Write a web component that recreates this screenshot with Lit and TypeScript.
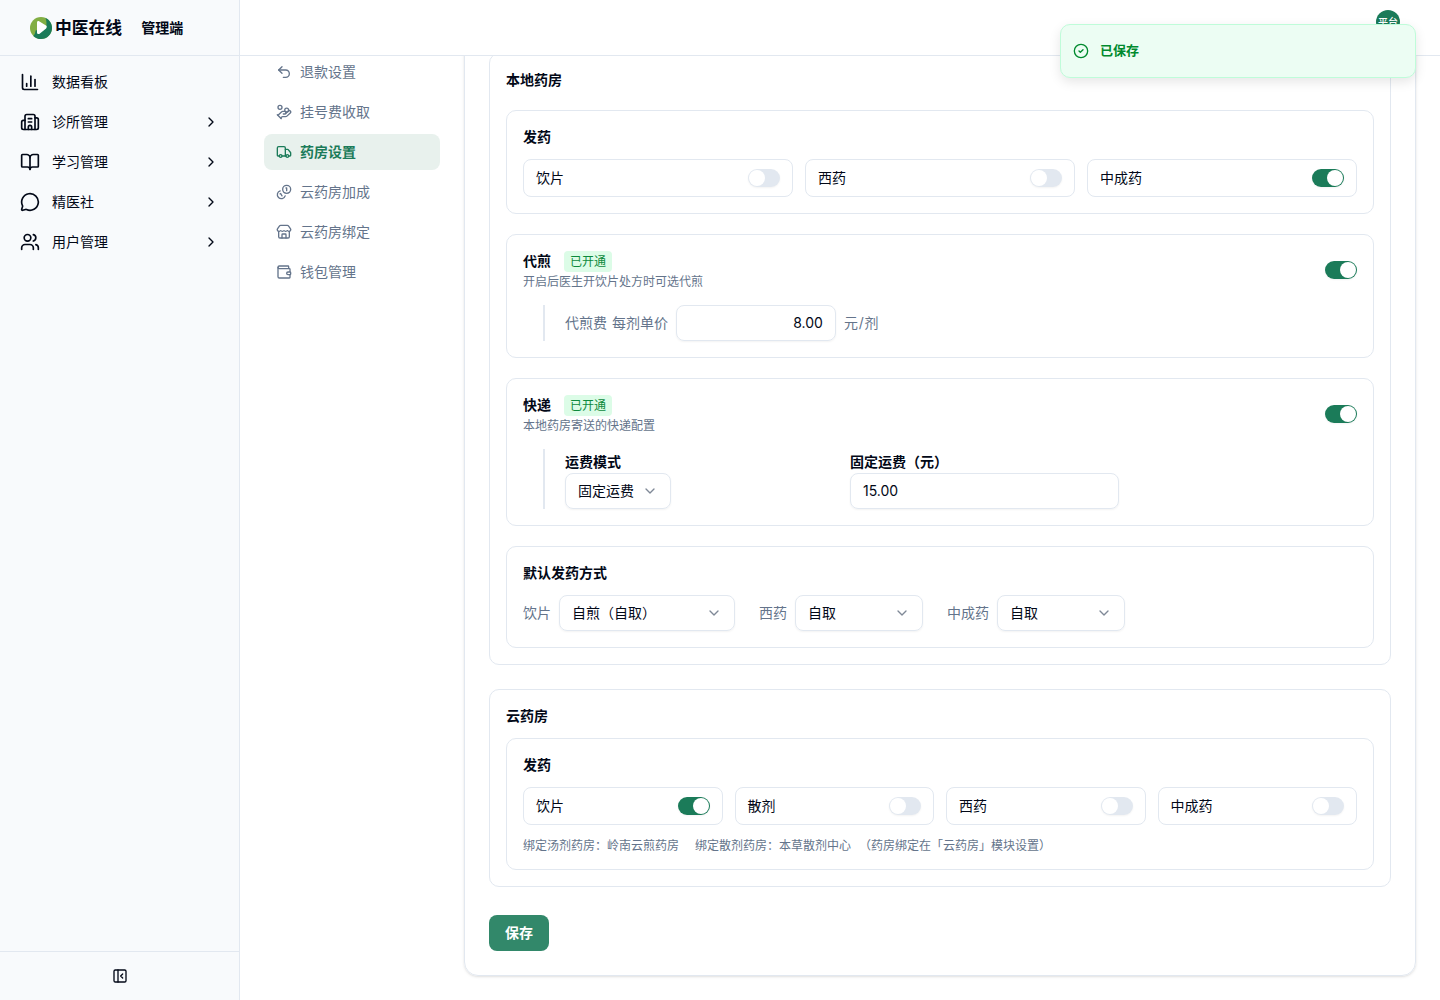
import { LitElement, html, css, svg, type SVGTemplateResult } from "lit";
import { customElement, property } from "lit/decorators.js";
import { classMap } from "lit/directives/class-map.js";

const icons: Record<string, SVGTemplateResult> = {
  chart: svg`<path d="M3 3v16a2 2 0 0 0 2 2h16"/><path d="M18 17V9"/><path d="M13 17V5"/><path d="M8 17v-3"/>`,
  building: svg`<path d="M10 12h4"/><path d="M10 8h4"/><path d="M14 21v-3a2 2 0 0 0-4 0v3"/><path d="M6 10H4a2 2 0 0 0-2 2v7a2 2 0 0 0 2 2h16a2 2 0 0 0 2-2V9a2 2 0 0 0-2-2h-2"/><path d="M6 21V5a2 2 0 0 1 2-2h8a2 2 0 0 1 2 2v16"/>`,
  book: svg`<path d="M12 7v14"/><path d="M3 18a1 1 0 0 1-1-1V4a1 1 0 0 1 1-1h5a4 4 0 0 1 4 4 4 4 0 0 1 4-4h5a1 1 0 0 1 1 1v13a1 1 0 0 1-1 1h-6a3 3 0 0 0-3 3 3 3 0 0 0-3-3z"/>`,
  message: svg`<path d="M2.992 16.342a2 2 0 0 1 .094 1.167l-1.065 3.29a1 1 0 0 0 1.236 1.168l3.413-.998a2 2 0 0 1 1.099.092 10 10 0 1 0-4.777-4.719"/>`,
  users: svg`<path d="M16 21v-2a4 4 0 0 0-4-4H6a4 4 0 0 0-4 4v2"/><path d="M16 3.128a4 4 0 0 1 0 7.744"/><path d="M22 21v-2a4 4 0 0 0-3-3.87"/><circle cx="9" cy="7" r="4"/>`,
  right: svg`<path d="m9 18 6-6-6-6"/>`,
  down: svg`<path d="m6 9 6 6 6-6"/>`,
  undo: svg`<path d="M9 14 4 9l5-5"/><path d="M4 9h10.5a5.5 5.5 0 0 1 5.5 5.5a5.5 5.5 0 0 1-5.5 5.5H11"/>`,
  hand: svg`<path d="M11 15h2a2 2 0 1 0 0-4h-3c-.6 0-1.1.2-1.4.6L3 17"/><path d="m7 21 1.6-1.4c.3-.4.8-.6 1.4-.6h4c1.1 0 2.1-.4 2.8-1.2l4.6-4.4a2 2 0 0 0-2.75-2.91l-4.2 3.9"/><path d="m2 16 6 6"/><circle cx="16" cy="9" r="2.9"/><circle cx="6" cy="5" r="3"/>`,
  truck: svg`<path d="M14 18V6a2 2 0 0 0-2-2H4a2 2 0 0 0-2 2v11a1 1 0 0 0 1 1h2"/><path d="M15 18H9"/><path d="M19 18h2a1 1 0 0 0 1-1v-3.65a1 1 0 0 0-.22-.624l-3.48-4.35A1 1 0 0 0 17.52 8H14"/><circle cx="17" cy="18" r="2"/><circle cx="7" cy="18" r="2"/>`,
  coins: svg`<path d="M13.744 17.736a6 6 0 1 1-7.48-7.48"/><path d="M15 6h1v4"/><path d="m6.134 14.768.866-.5 2 3.464"/><circle cx="16" cy="8" r="6"/>`,
  store: svg`<path d="M15 21v-5a1 1 0 0 0-1-1h-4a1 1 0 0 0-1 1v5"/><path d="M17.774 10.31a1.12 1.12 0 0 0-1.549 0 2.5 2.5 0 0 1-3.451 0 1.12 1.12 0 0 0-1.548 0 2.5 2.5 0 0 1-3.452 0 1.12 1.12 0 0 0-1.549 0 2.5 2.5 0 0 1-3.77-3.248l2.889-4.184A2 2 0 0 1 7 2h10a2 2 0 0 1 1.653.873l2.895 4.192a2.5 2.5 0 0 1-3.774 3.244"/><path d="M4 10.95V19a2 2 0 0 0 2 2h12a2 2 0 0 0 2-2v-8.05"/>`,
  wallet: svg`<path d="M19 7V4a1 1 0 0 0-1-1H5a2 2 0 0 0 0 4h15a1 1 0 0 1 1 1v4h-3a2 2 0 0 0 0 4h3a1 1 0 0 0 1-1v-2a1 1 0 0 0-1-1"/><path d="M3 5v14a2 2 0 0 0 2 2h15a1 1 0 0 0 1-1v-4"/>`,
  panel: svg`<rect x="3" y="3" width="18" height="18" rx="2"/><path d="M9 3v18"/><path d="m16 15-3-3 3-3"/>`,
  check: svg`<circle cx="12" cy="12" r="10"/><path d="m9 12 2 2 4-4"/>`,
};

@customElement("ui-icon")
class UiIcon extends LitElement {
  static styles = css`
    :host { display: block; flex: none; width: 16px; height: 16px; }
    :host([size="20"]) { width: 20px; height: 20px; }
    .glyph { display: block; width: 100%; height: 100%; fill: none; stroke: currentColor; stroke-width: 2; stroke-linecap: round; stroke-linejoin: round; }
  `;
  @property() name = "";
  render() {
    return html`<svg class="glyph" viewBox="0 0 24 24">${icons[this.name]}</svg>`;
  }
}

@customElement("ui-switch")
class UiSwitch extends LitElement {
  static styles = css`
    :host { display: block; flex: none; }
    .track { display: flex; box-sizing: border-box; width: 32px; height: 18px; padding: 1px; border-radius: 9px; background: #e2e8f0; box-shadow: 0 1px 2px rgba(0, 0, 0, 0.05); }
    .track.on { background: #1b7b59; justify-content: flex-end; }
    .thumb { width: 16px; height: 16px; border-radius: 8px; background: #fff; }
  `;
  @property({ type: Boolean }) on = false;
  render() {
    return html`<div class=${classMap({ track: true, on: this.on })}><div class="thumb"></div></div>`;
  }
}

@customElement("app-root")
class AppRoot extends LitElement {
  static styles = css`
    :host {
      display: block; position: relative; width: 1440px; height: 1000px; overflow: hidden;
      background: #fff; color: #020817; font: 400 14px/20px Inter, "Noto Sans CJK SC", sans-serif;
      text-spacing-trim: space-all;
    }
    * { box-sizing: border-box; }
    .shell { display: flex; height: 100%; }
    .sidebar { display: flex; flex-direction: column; width: 240px; background: #f8fafc; border-right: 1px solid #e2e8f0; }
    .brand { display: flex; align-items: center; height: 56px; padding-left: 30px; border-bottom: 1px solid #e2e8f0; }
    .logo { width: 22px; height: 22px; flex: none; }
    .brand-name { margin-left: 3px; font-size: 16.8px; font-weight: 600; }
    .brand-role { margin-left: 19px; font-weight: 600; }
    .menu { flex: 1; display: flex; flex-direction: column; gap: 4px; padding: 8px; }
    .menu-item { display: flex; align-items: center; gap: 12px; height: 36px; padding: 0 12px; }
    .menu-label { flex: 1; }
    .foot { display: flex; align-items: center; justify-content: center; height: 49px; border-top: 1px solid #e2e8f0; }
    .main { flex: 1; display: flex; flex-direction: column; min-width: 0; }
    .topbar { display: flex; justify-content: flex-end; height: 56px; padding: 10px 40px 0 0; border-bottom: 1px solid #e2e8f0; }
    .avatar { display: flex; align-items: center; justify-content: center; width: 24px; height: 24px; border-radius: 50%; background: #1b7b59; color: #fff; font-size: 10px; line-height: 12px; font-weight: 500; white-space: nowrap; }
    .content { flex: 1; min-height: 0; overflow: hidden; display: flex; gap: 24px; padding: 0 24px; }
    .subnav { display: flex; flex-direction: column; gap: 4px; width: 176px; margin-top: -2px; color: #64748b; }
    .sub-item { display: flex; align-items: center; gap: 8px; height: 36px; padding: 0 12px; border-radius: 8px; }
    .sub-item.active { background: #e8f1ed; color: #1b7b59; font-weight: 600; }
    .panel-col { flex: 1; display: flex; flex-direction: column; justify-content: flex-end; padding-bottom: 24px; }
    .panel { flex: none; padding: 64px 24px 24px; border: 1px solid #e2e8f0; border-radius: 14px; box-shadow: 0 1px 3px rgba(0, 0, 0, 0.1), 0 1px 2px -1px rgba(0, 0, 0, 0.1); }
    .group { display: flex; flex-direction: column; gap: 20px; padding: 16px; border: 1px solid #e2e8f0; border-radius: 10px; }
    .group.cloud { gap: 12px; margin-top: 24px; }
    .title { font-weight: 600; }
    .box { display: flex; flex-direction: column; gap: 12px; padding: 16px; border: 1px solid #e2e8f0; border-radius: 10px; }
    .box.roomy { gap: 16px; }
    .cells { display: grid; gap: 12px; grid-template-columns: repeat(3, 1fr); }
    .cells.four { grid-template-columns: repeat(4, 1fr); }
    .cell { display: flex; align-items: center; justify-content: space-between; height: 38px; padding: 0 12px; border: 1px solid #e2e8f0; border-radius: 8px; }
    .head { display: flex; align-items: center; justify-content: space-between; height: 38px; }
    .head-line { display: flex; gap: 13px; height: 22px; }
    .badge { height: 21px; padding: 0 6px; border-radius: 4px; background: #dcfce7; color: #0d8a3d; font-size: 12px; line-height: 21px; }
    .note { color: #64748b; font-size: 12px; line-height: 17px; }
    .indent { display: flex; align-items: center; gap: 8px; margin-left: 20px; padding-left: 20px; border-left: 2px solid #e2e8f0; color: #64748b; }
    .indent.fees { display: grid; grid-template-columns: 1fr 1fr; gap: 16px; max-width: 576px; color: #020817; }
    .price-label { word-spacing: 1px; }
    .unit { letter-spacing: 0.7px; }
    .label { height: 24px; line-height: 26px; font-weight: 600; }
    .input { display: flex; align-items: center; height: 36px; padding: 0 12px; border: 1px solid #e2e8f0; border-radius: 8px; color: #020817; box-shadow: 0 1px 2px rgba(0, 0, 0, 0.05); }
    .input.price { width: 160px; justify-content: flex-end; }
    .select { display: inline-flex; align-items: center; justify-content: space-between; gap: 8px; height: 36px; padding: 0 12px; border: 1px solid #e2e8f0; border-radius: 8px; color: #020817; box-shadow: 0 1px 2px rgba(0, 0, 0, 0.05); vertical-align: top; }
    .select.wide { width: 176px; }
    .select.mid { width: 128px; }
    .caret { color: #7f8997; }
    .defaults { display: flex; gap: 24px; color: #64748b; }
    .pair { display: flex; align-items: center; gap: 8px; }
    .binding { display: flex; height: 16px; }
    .bind-next { margin-left: 16px; }
    .bind-tip { margin-left: 8px; }
    .save { display: flex; align-items: center; justify-content: center; width: 60px; height: 36px; margin-top: 28px; border-radius: 8px; background: #32886a; color: #fff; font-weight: 600; }
    .toast { position: absolute; left: 1060px; top: 24px; display: flex; align-items: center; gap: 11px; width: 356px; height: 54px; padding: 0 12px; border: 1px solid #bffcd9; border-radius: 10px; background: #ecfdf3; color: #008a2e; box-shadow: 0 4px 12px rgba(0, 0, 0, 0.1); }
    .toast-text { padding-bottom: 2px; font-size: 13px; font-weight: 600; }
  `;

  private menu = [
    { icon: "chart", label: "数据看板", sub: false },
    { icon: "building", label: "诊所管理", sub: true },
    { icon: "book", label: "学习管理", sub: true },
    { icon: "message", label: "精医社", sub: true },
    { icon: "users", label: "用户管理", sub: true },
  ];
  private settings = [
    { icon: "undo", label: "退款设置" },
    { icon: "hand", label: "挂号费收取" },
    { icon: "truck", label: "药房设置", active: true },
    { icon: "coins", label: "云药房加成" },
    { icon: "store", label: "云药房绑定" },
    { icon: "wallet", label: "钱包管理" },
  ];

  private cell(label: string, on: boolean) {
    return html`<div class="cell"><span>${label}</span><ui-switch ?on=${on}></ui-switch></div>`;
  }
  private select(value: string, kind = "") {
    return html`<div class="select ${kind}"><span>${value}</span><ui-icon class="caret" name="down"></ui-icon></div>`;
  }
  private head(title: string, note: string) {
    return html`<div class="head">
      <div>
        <div class="head-line"><span class="title">${title}</span><span class="badge">已开通</span></div>
        <div class="note">${note}</div>
      </div>
      <ui-switch on></ui-switch>
    </div>`;
  }

  render() {
    return html`
      <div class="shell">
        <aside class="sidebar">
          <div class="brand">
            <svg class="logo" viewBox="0 0 22 22">
              <circle cx="11" cy="11" r="11" fill="#82ae43"/>
              <path d="M15.500 1C19.400 2.600 22 6.500 22 11c0 6.100-4.900 11-11 11-3 0-5.700-1.200-7.700-3.100C5 17.500 5.200 15.500 5.600 13.500L16 11c.8-3.500.7-7-.5-10Z" fill="#1b7b59"/>
              <path d="M7 5.600c0-1.300 1-1.900 2.100-1.300l6.900 4.300c1 .7 1 2 .1 2.800l-6.500 5.300c-1 .8-2.600.2-2.600-1.200Z" fill="#fff"/>
            </svg>
            <span class="brand-name">中医在线</span><span class="brand-role">管理端</span>
          </div>
          <nav class="menu">
            ${this.menu.map((m) => html`<div class="menu-item"><ui-icon size="20" name=${m.icon}></ui-icon><span class="menu-label">${m.label}</span>${m.sub ? html`<ui-icon name="right"></ui-icon>` : ""}</div>`)}
          </nav>
          <div class="foot"><ui-icon name="panel"></ui-icon></div>
        </aside>
        <main class="main">
          <header class="topbar"><div class="avatar">平台</div></header>
          <div class="content">
            <nav class="subnav">
              ${this.settings.map((s) => html`<div class=${classMap({ "sub-item": true, active: !!s.active })}><ui-icon name=${s.icon}></ui-icon><span>${s.label}</span></div>`)}
            </nav>
            <div class="panel-col">
              <section class="panel">
                <div class="group">
                  <div class="title">本地药房</div>
                  <div class="box">
                    <div class="title">发药</div>
                    <div class="cells">${this.cell("饮片", false)}${this.cell("西药", false)}${this.cell("中成药", true)}</div>
                  </div>
                  <div class="box roomy">
                    ${this.head("代煎", "开启后医生开饮片处方时可选代煎")}
                    <div class="indent"><span class="price-label">代煎费 每剂单价</span><div class="input price">8.00</div><span class="unit">元/剂</span></div>
                  </div>
                  <div class="box roomy">
                    ${this.head("快递", "本地药房寄送的快递配置")}
                    <div class="indent fees">
                      <div><div class="label">运费模式</div>${this.select("固定运费")}</div>
                      <div><div class="label">固定运费（元）</div><div class="input">15.00</div></div>
                    </div>
                  </div>
                  <div class="box">
                    <div class="title">默认发药方式</div>
                    <div class="defaults">
                      <div class="pair"><span>饮片</span>${this.select("自煎（自取）", "wide")}</div>
                      <div class="pair"><span>西药</span>${this.select("自取", "mid")}</div>
                      <div class="pair"><span>中成药</span>${this.select("自取", "mid")}</div>
                    </div>
                  </div>
                </div>
                <div class="group cloud">
                  <div class="title">云药房</div>
                  <div class="box">
                    <div class="title">发药</div>
                    <div class="cells four">${this.cell("饮片", true)}${this.cell("散剂", false)}${this.cell("西药", false)}${this.cell("中成药", false)}</div>
                    <div class="note binding"><span>绑定汤剂药房：岭南云煎药房</span><span class="bind-next">绑定散剂药房：本草散剂中心</span><span class="bind-tip">（药房绑定在「云药房」模块设置）</span></div>
                  </div>
                </div>
                <div class="save">保存</div>
              </section>
            </div>
          </div>
        </main>
      </div>
      <div class="toast"><ui-icon name="check"></ui-icon><span class="toast-text">已保存</span></div>
    `;
  }
}
